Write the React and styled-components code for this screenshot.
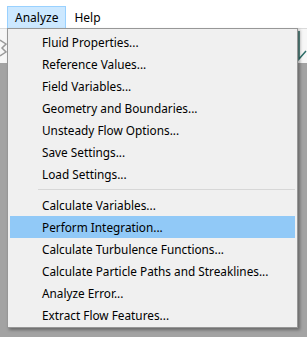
import React from "react";
import styled, { createGlobalStyle } from "styled-components";

const GlobalStyle = createGlobalStyle`
  html, body {
    margin: 0;
    padding: 0;
    background: #a3a3a3;
  }
  body {
    font-family: "Noto Sans", "Liberation Sans", sans-serif;
  }
`;

const Screen = styled.div`
  position: relative;
  width: 307px;
  height: 337px;
  overflow: hidden;
  background: #a3a3a3;
`;

const MenuBar = styled.div`
  height: 28px;
  background: #ffffff;
  display: flex;
  align-items: flex-end;
  padding-left: 7px;
  box-sizing: border-box;
`;

const BarItem = styled.div`
  height: 22px;
  padding: 0 7px;
  display: flex;
  align-items: center;
  font-size: 12px;
  color: #000;
  box-sizing: border-box;
  background: ${(p) => (p.$open ? "#cce8ff" : "transparent")};
  border: 1px solid ${(p) => (p.$open ? "#99d1ff" : "transparent")};
  border-bottom: none;
`;

const ToolStrip = styled.div`
  height: 34px;
  background: #f7f7f7;
  display: flex;
  justify-content: space-between;
  align-items: center;
  border-top: 1px solid #dadada;
`;

const Dropdown = styled.div`
  position: absolute;
  left: 7px;
  top: 28px;
  width: 291px;
  box-sizing: border-box;
  background: #f0f0f0;
  border: 1px solid #979797;
  box-shadow: 2px 2px 3px rgba(0, 0, 0, 0.35);
  padding: 2px 2px 1px;
  display: flex;
  flex-direction: column;
`;

const Item = styled.div`
  height: 22px;
  display: flex;
  align-items: center;
  padding-left: 32px;
  font-size: 11.8px;
  color: #000;
  background: ${(p) => (p.$active ? "#91c9f7" : "transparent")};
  white-space: nowrap;
`;

const Separator = styled.div`
  height: 1px;
  margin: 4px 0 4px 28px;
  background: #d7d7d7;
`;

const groupA = [
  "Fluid Properties...",
  "Reference Values...",
  "Field Variables...",
  "Geometry and Boundaries...",
  "Unsteady Flow Options...",
  "Save Settings...",
  "Load Settings...",
];

const groupB = [
  "Calculate Variables...",
  "Perform Integration...",
  "Calculate Turbulence Functions...",
  "Calculate Particle Paths and Streaklines...",
  "Analyze Error...",
  "Extract Flow Features...",
];

const App = () => {
  return (
    <>
      <GlobalStyle />
      <Screen>
        <MenuBar>
          <BarItem $open>Analyze</BarItem>
          <BarItem>Help</BarItem>
        </MenuBar>
        <ToolStrip>
          <svg width="10" height="24" viewBox="0 0 10 24">
            <path d="M0 6 L6 10 L2 14 L6 18 L0 22" fill="none" stroke="#9a9a9a" strokeWidth="1.5" />
          </svg>
          <svg width="10" height="34" viewBox="0 0 10 34">
            <path d="M2 2 L2 30 L9 22" fill="none" stroke="#2f6f6a" strokeWidth="1.5" />
          </svg>
        </ToolStrip>
        <Dropdown>
          {groupA.map((t) => (
            <Item key={t}>{t}</Item>
          ))}
          <Separator />
          {groupB.map((t) => (
            <Item key={t} $active={t === "Perform Integration..."}>
              {t}
            </Item>
          ))}
        </Dropdown>
      </Screen>
    </>
  );
};

export default App;
